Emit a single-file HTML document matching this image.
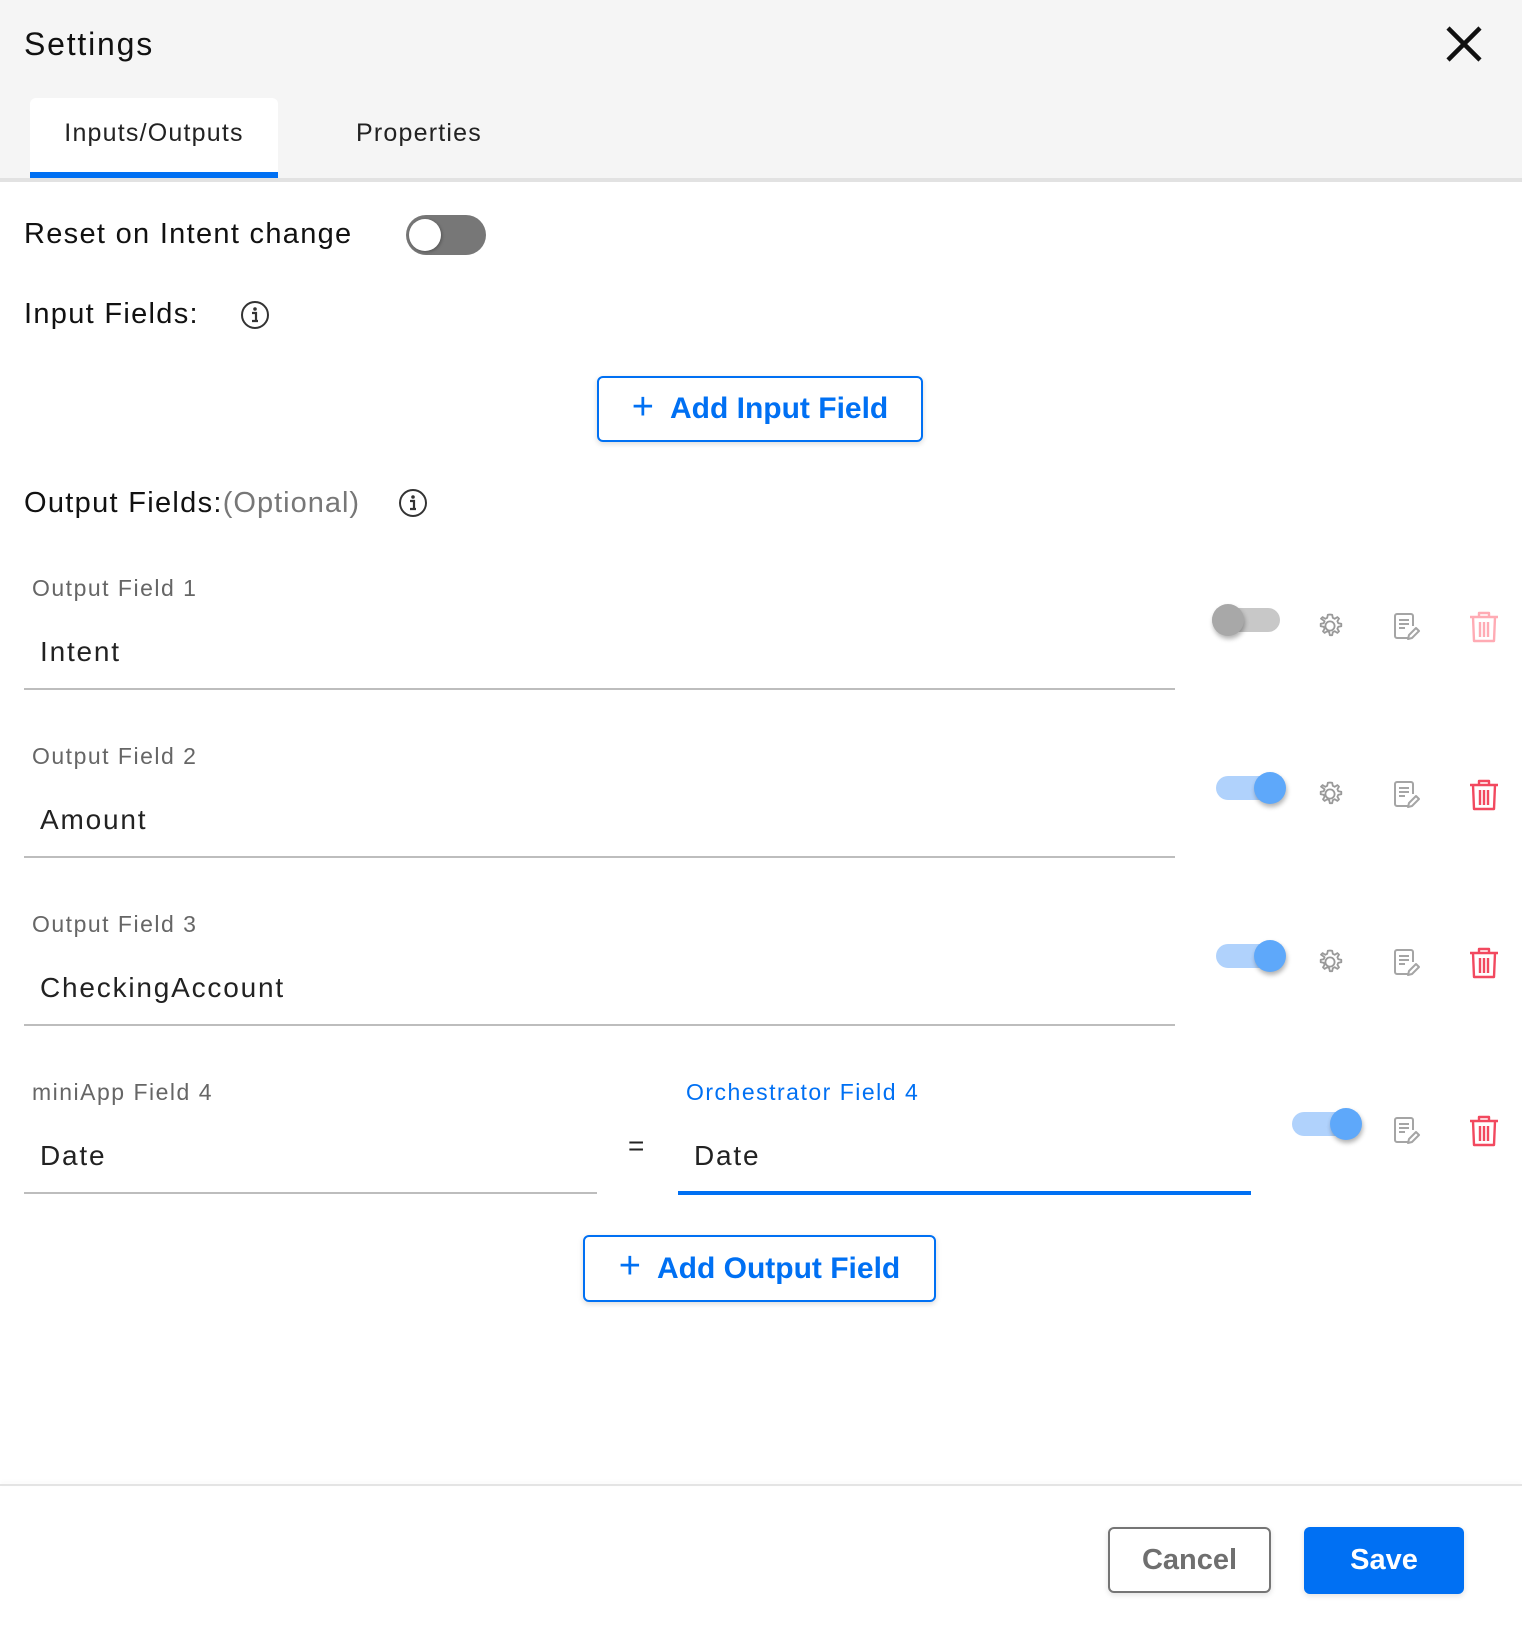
<!DOCTYPE html>
<html><head><meta charset="utf-8"><style>
*{box-sizing:border-box;margin:0;padding:0}
body{width:1522px;height:1628px;background:#fff;font-family:"Liberation Sans",sans-serif;position:relative;overflow:hidden;color:#111}
.a{position:absolute;white-space:nowrap}
.hdr{position:absolute;left:0;top:0;width:1522px;height:178px;background:#f5f5f5}
.lbl{font-size:23px;color:#666;letter-spacing:1.5px}
.val{font-size:28px;color:#222;letter-spacing:1.8px}
.line{position:absolute;height:2px;background:#bdbdbd}
.trk{position:absolute;height:24px;border-radius:12px}
.knob{position:absolute;width:32px;height:32px;border-radius:50%;box-shadow:1px 3px 5px rgba(0,0,0,.3)}
.btn{position:absolute;border:2px solid #0070f3;border-radius:6px;color:#0070f3;font-size:30px;font-weight:bold;display:flex;align-items:center;justify-content:center;box-shadow:0 2px 6px rgba(0,0,0,.15)}
.h{font-size:29px;color:#111;letter-spacing:1.3px}
</style></head><body>
<div class="hdr"></div>
<div class="a" style="left:24px;top:26px;font-size:32px;color:#111;letter-spacing:1.8px">Settings</div>
<svg class="a" style="left:1445px;top:25px" width="38" height="38" viewBox="0 0 38 38"><path d="M3 3L35 35M35 3L3 35" stroke="#111" stroke-width="4.5"/></svg>
<div class="a" style="left:30px;top:98px;width:248px;height:80px;background:#fff;border-radius:6px 6px 0 0"></div>
<div class="a" style="left:30px;top:172px;width:248px;height:6px;background:#0070f3"></div>
<div class="a" style="left:0;top:178px;width:1522px;height:4px;background:#e2e2e2"></div>
<div class="a" style="left:30px;top:119px;width:248px;text-align:center;font-size:25px;color:#222;letter-spacing:1.2px">Inputs/Outputs</div>
<div class="a" style="left:300px;top:119px;width:238px;text-align:center;font-size:25px;color:#222;letter-spacing:1.2px">Properties</div>

<div class="a h" style="left:24px;top:218px">Reset on Intent change</div>
<div class="a" style="left:406px;top:215px;width:80px;height:40px;border-radius:20px;background:#777"></div>
<div class="a" style="left:409px;top:219px;width:32px;height:32px;border-radius:50%;background:#fff;box-shadow:1px 1px 3px rgba(0,0,0,.3)"></div>

<div class="a h" style="left:24px;top:298px">Input Fields:</div>
<svg class="a" style="left:240px;top:300px" width="30" height="30" viewBox="0 0 30 30"><circle cx="15" cy="15" r="13" fill="none" stroke="#333" stroke-width="2"/><circle cx="15" cy="9" r="1.8" fill="#333"/><path d="M12 13h4v8M12 21h6" stroke="#333" stroke-width="2.2" fill="none"/></svg>

<div class="btn" style="left:597px;top:376px;width:326px;height:66px"><span style="font-size:38px;font-weight:normal;margin-right:16px;margin-top:-4px">+</span>Add Input Field</div>

<div class="a h" style="left:24px;top:487px">Output Fields:<span style="color:#777;letter-spacing:1px">(Optional)</span></div>
<svg class="a" style="left:398px;top:488px" width="30" height="30" viewBox="0 0 30 30"><circle cx="15" cy="15" r="13" fill="none" stroke="#333" stroke-width="2"/><circle cx="15" cy="9" r="1.8" fill="#333"/><path d="M12 13h4v8M12 21h6" stroke="#333" stroke-width="2.2" fill="none"/></svg>

<div class="a lbl" style="left:32px;top:575px">Output Field 1</div>
<div class="a val" style="left:40px;top:636px">Intent</div>
<div class="line" style="left:24px;top:688px;width:1151px"></div>

<div class="a lbl" style="left:32px;top:743px">Output Field 2</div>
<div class="a val" style="left:40px;top:804px">Amount</div>
<div class="line" style="left:24px;top:856px;width:1151px"></div>

<div class="a lbl" style="left:32px;top:911px">Output Field 3</div>
<div class="a val" style="left:40px;top:972px">CheckingAccount</div>
<div class="line" style="left:24px;top:1024px;width:1151px"></div>

<div class="a lbl" style="left:32px;top:1079px">miniApp Field 4</div>
<div class="a val" style="left:40px;top:1140px">Date</div>
<div class="line" style="left:24px;top:1192px;width:573px"></div>
<div class="a" style="left:628px;top:1130px;font-size:28px;color:#222">=</div>
<div class="a lbl" style="left:686px;top:1079px;color:#0070f3">Orchestrator Field 4</div>
<div class="a val" style="left:694px;top:1140px">Date</div>
<div class="a" style="left:678px;top:1191px;width:573px;height:4px;background:#0070f3"></div>

<div class="trk" style="left:1212px;top:608px;width:68px;background:#c8c8c8"></div>
<div class="knob" style="left:1212px;top:604px;background:#a8a8a8"></div>
<div class="trk" style="left:1216px;top:776px;width:60px;background:#b0d2fc"></div>
<div class="knob" style="left:1254px;top:772px;background:#5ea8fa"></div>
<div class="trk" style="left:1216px;top:944px;width:60px;background:#b0d2fc"></div>
<div class="knob" style="left:1254px;top:940px;background:#5ea8fa"></div>
<div class="trk" style="left:1292px;top:1112px;width:60px;background:#b0d2fc"></div>
<div class="knob" style="left:1330px;top:1108px;background:#5ea8fa"></div>

<svg width="0" height="0" style="position:absolute"><defs>
<g id="gear"><path d="M14 2.5l2.2.3.6 3 2 1 2.6-1.7 1.6 1.5-1.6 2.6.9 2 3 .6v2.4l-3 .6-.9 2 1.6 2.6-1.6 1.5-2.6-1.7-2 1-.6 3h-2.4l-.6-3-2-1-2.6 1.7-1.6-1.5 1.6-2.6-.9-2-3-.6v-2.4l3-.6.9-2L5 6.6l1.6-1.5 2.6 1.7 2-1 .6-3z" fill="none" stroke="#999" stroke-width="1.8" stroke-linejoin="round"/><circle cx="14" cy="14" r="4.6" fill="none" stroke="#999" stroke-width="1.8"/></g>
<g id="doc"><path d="M17 26H5a2 2 0 0 1-2-2V4a2 2 0 0 1 2-2h14a2 2 0 0 1 2 2v10" fill="none" stroke="#a5a5a5" stroke-width="2"/><path d="M7 8h10M7 12h10M7 16h6" stroke="#a5a5a5" stroke-width="2"/><path d="M16 27l1-4 7-7 3 3-7 7z" fill="none" stroke="#a5a5a5" stroke-width="2" stroke-linejoin="round"/></g>
<g id="trash"><path d="M2 6h28M11 6V2h10v4M5 6l1 24h20l1-24M12 11v15M16 11v15M20 11v15" fill="none" stroke-width="2.4" stroke-linejoin="round"/></g>
</defs></svg>
<svg class="a" style="left:1315px;top:611px" width="30" height="30" viewBox="-1 -1 30 30"><use href="#gear"/></svg>
<svg class="a" style="left:1315px;top:779px" width="30" height="30" viewBox="-1 -1 30 30"><use href="#gear"/></svg>
<svg class="a" style="left:1315px;top:947px" width="30" height="30" viewBox="-1 -1 30 30"><use href="#gear"/></svg>
<svg class="a" style="left:1392px;top:612px" width="30" height="30"><use href="#doc"/></svg>
<svg class="a" style="left:1392px;top:780px" width="30" height="30"><use href="#doc"/></svg>
<svg class="a" style="left:1392px;top:948px" width="30" height="30"><use href="#doc"/></svg>
<svg class="a" style="left:1392px;top:1116px" width="30" height="30"><use href="#doc"/></svg>
<svg class="a" style="left:1468px;top:611px" width="32" height="33" stroke="#ffabb4"><use href="#trash"/></svg>
<svg class="a" style="left:1468px;top:779px" width="32" height="33" stroke="#f2495f"><use href="#trash"/></svg>
<svg class="a" style="left:1468px;top:947px" width="32" height="33" stroke="#f2495f"><use href="#trash"/></svg>
<svg class="a" style="left:1468px;top:1115px" width="32" height="33" stroke="#f2495f"><use href="#trash"/></svg>

<div class="btn" style="left:583px;top:1235px;width:353px;height:67px"><span style="font-size:38px;font-weight:normal;margin-right:16px;margin-top:-4px">+</span>Add Output Field</div>

<div class="a" style="left:0;top:1484px;width:1522px;height:2px;background:#e4e4e4;box-shadow:0 -2px 4px rgba(0,0,0,.04)"></div>
<div class="a" style="left:1108px;top:1527px;width:163px;height:66px;border:2px solid #757575;border-radius:6px;font-size:29px;font-weight:bold;color:#6f6f6f;display:flex;align-items:center;justify-content:center;box-shadow:0 2px 6px rgba(0,0,0,.12)">Cancel</div>
<div class="a" style="left:1304px;top:1527px;width:160px;height:67px;background:#0070f3;border-radius:6px;font-size:29px;font-weight:bold;color:#fff;display:flex;align-items:center;justify-content:center;box-shadow:0 2px 6px rgba(0,0,0,.12)">Save</div>
</body></html>
